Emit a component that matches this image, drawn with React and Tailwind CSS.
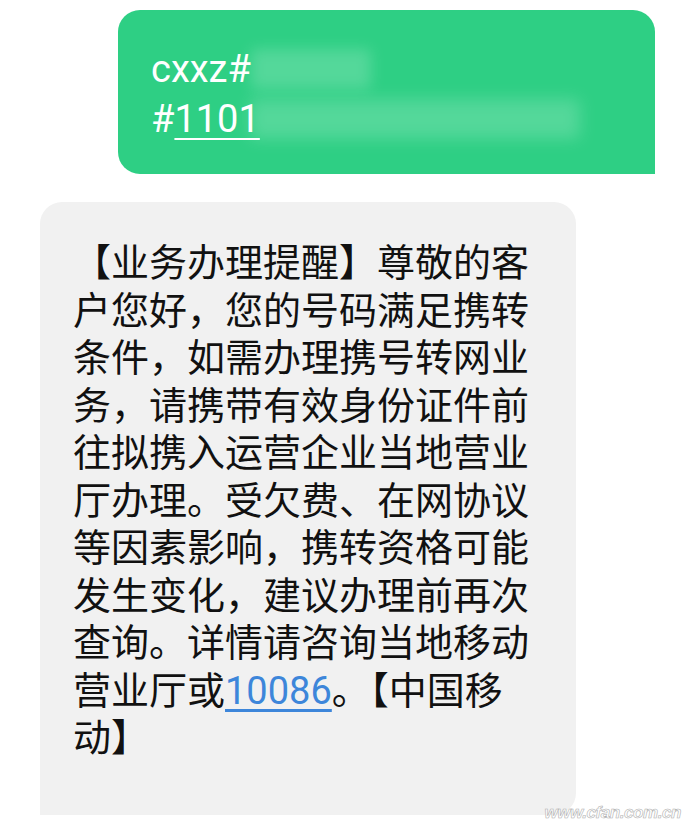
import React from "react";

const cjk = { fontFamily: '"Noto Sans CJK SC", "Noto Sans", sans-serif' };
const roboto = { fontFamily: 'Roboto, "Noto Sans", sans-serif' };

const message =
  "业务办理提醒】尊敬的客户您好，您的号码满足携转条件，如需办理携号转网业务，请携带有效身份证件前往拟携入运营企业当地营业厅办理。受欠费、在网协议等因素影响，携转资格可能发生变化，建议办理前再次查询。详情请咨询当地移动营业厅或";

const App = () => {
  return (
    <div className="relative w-full min-h-[830px] bg-white overflow-hidden">
      {/* sent message */}
      <div className="pt-[10px] pl-[118px]">
        <div
          className="w-[537px] bg-[#2ecf84] rounded-t-[22px] rounded-bl-[22px] pl-[33px] pt-[34px] pb-[30px] text-white text-[38px] leading-[50px]"
          style={roboto}
        >
          <div className="flex items-center">
            <span>cxxz#</span>
            <span className="blur-[7px] opacity-60 h-[40px] w-[120px] bg-white/30 rounded" />
          </div>
          <div className="flex items-center">
            <span>#</span>
            <span className="underline decoration-2 underline-offset-[6px]">1101</span>
            <span className="-ml-[10px] blur-[8px] opacity-60 h-[40px] w-[330px] bg-white/30 rounded" />
          </div>
        </div>
      </div>

      {/* received message */}
      <div className="pt-[28px] pl-[40px]">
        <div className="w-[536px] bg-[#f1f1f1] rounded-t-[22px] rounded-br-[22px] pl-[33px] pt-[34px] pb-[56px]">
          <p className="w-[462px] text-[38px] leading-[47.5px] text-[#111]" style={cjk}>
            【{message}
            <span
              className="leading-none text-[#3d86da] underline decoration-[#3d86da] underline-offset-[5px]"
              style={roboto}
            >
              10086
            </span>
            。【中国移动】
          </p>
        </div>
      </div>

      <div
        className="absolute right-[4px] bottom-[5px] text-[17px] italic font-bold tracking-tight text-white"
        style={{ fontFamily: '"Liberation Sans", sans-serif', WebkitTextStroke: "0.6px #b0b0b0" }}
      >
        www.cfan.com.cn
      </div>
    </div>
  );
};

export default App;
